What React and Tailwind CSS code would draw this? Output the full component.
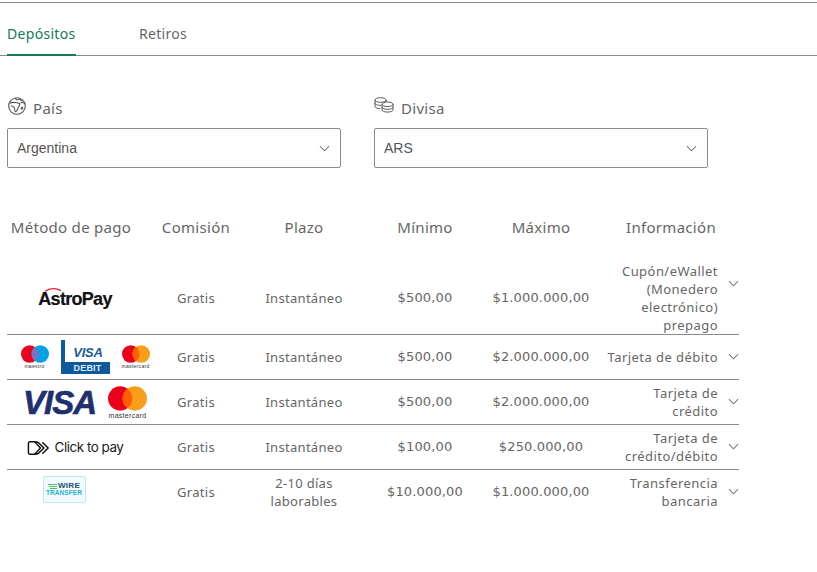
import React from "react";

const grid = "grid grid-cols-[136px_106px_110px_132px_100px_148px]";
const numFont = "font-['DejaVu_Sans',sans-serif] tracking-[0.15px]";

function Chevron({ className }) {
  return (
    <svg viewBox="0 0 12 7" className={className} fill="none" stroke="#777" strokeWidth="1.1">
      <path d="M1 1l5 5 5-5" />
    </svg>
  );
}

function GlobeIcon() {
  return (
    <svg viewBox="0 0 18 18" className="w-[18px] h-[18px]" fill="none" stroke="#555" strokeWidth="1.100">
      <circle cx="9" cy="9" r="8.300" />
      <path d="M2 6.300c1.300-1 2.700-1.100 4-.8 1.100.3 1.800-.2 2.900.2 1 .4 1.800.1 2.500.8.600.6.500 1.500 0 2.200-.6.800-1.200 1.100-1.300 2.100-.1 1-.7 1.700-1.100 2.500-.4.900-1.100 1.700-1.700 1.300-.6-.3-.4-1.700-.8-2.700-.3-.9-.1-1.500-.8-2-.8-.5-1.900-.4-2.500-1.400" />
      <path d="M7.400.9c.1 1.200 1 2 2.100 1.900.9 0 1.200-.7 2-.7.800 0 1 .8 1.400 1.300.4.500 1.100.6 1.400 1.200M12.400 6c1-.6 2-.6 2.700-.2.500.3 1.200.4 2.100.3M13.500 10.500c.7-.5 1.300-.2 1.200.6-.1.900-.9 1.500-1.300 1-.3-.4-.2-1.200.1-1.600z" />
    </svg>
  );
}

function CoinsIcon() {
  return (
    <svg viewBox="0 0 20 16" className="w-[20px] h-[16px]" fill="none" stroke="#555" strokeWidth="1">
      <ellipse cx="6.500" cy="3" rx="5.500" ry="2.300" />
      <path d="M1 3v6.500c0 1.100 2 2 5 2.100M1 6.200c0 1.200 2.400 2.200 6 2.200M12 3v2" />
      <ellipse cx="13.500" cy="7.300" rx="5.500" ry="2.300" />
      <path d="M8 7.300v5.600c0 1.200 2.400 2.200 5.500 2.200s5.500-1 5.500-2.200V7.300M8 10.100c0 1.200 2.400 2.200 5.500 2.200s5.500-1 5.500-2.200" />
    </svg>
  );
}

function Circles({ left, right, mid, label, size, labelSize }) {
  return (
    <div className="flex flex-col items-center">
      <svg viewBox="0 0 40 25" className={size}>
        <circle cx="12.500" cy="12.500" r="12.500" fill={left} />
        <circle cx="27.500" cy="12.500" r="12.500" fill={right} />
        <path d="M20 2.500a12.500 12.500 0 0 1 0 20 12.500 12.500 0 0 1 0-20z" fill={mid} />
      </svg>
      <span className={`font-['Liberation_Sans',sans-serif] leading-none text-[#333] mt-px ${labelSize}`}>{label}</span>
    </div>
  );
}

function AstroPay() {
  return (
    <div className="relative pt-[1px] font-['Liberation_Sans',sans-serif] font-bold text-[18px] leading-none tracking-[-0.7px] text-[#111] [-webkit-text-stroke:0.2px_#111]">
      AstroPay
      <svg viewBox="0 0 16 4" className="absolute left-[6px] -top-[2px] w-[18px] h-[5px]" fill="none" stroke="#e2202c" strokeWidth="1.200">
        <path d="M1 3.500C5 .5 11 .5 15 3" />
      </svg>
    </div>
  );
}

function VisaDebit() {
  return (
    <div className="w-[49px] h-[34px] relative">
      <div className="absolute left-0 top-0 w-[4px] h-[34px] bg-[#0f5a9c]" />
      <div className="absolute left-0 bottom-0 w-[49px] h-[12px] bg-[#0f5a9c] flex items-center justify-end pr-[8px]">
        <span className="font-['Liberation_Sans',sans-serif] font-bold text-[#dfeaf4] text-[9px] leading-none tracking-[0.2px]">DEBIT</span>
      </div>
      <span className="absolute right-[7px] top-[6px] font-['Liberation_Sans',sans-serif] font-bold italic text-[#1a5a96] text-[13px] leading-none tracking-[-0.3px]">VISA</span>
    </div>
  );
}

function ClickToPay() {
  return (
    <div className="flex items-center gap-[4px] mt-px">
      <svg viewBox="0 0 25 16" className="w-[24px] h-[16px]" fill="none" stroke="#111" strokeWidth="1.500">
        <path d="M10 1.500H3a1.500 1.500 0 0 0-1.500 1.500v10A1.500 1.500 0 0 0 3 14.500h7" />
        <path d="M8.500 2h3l6 6-6 6h-3l5.500-6z" />
        <path d="M16 2l6 6-6 6" />
      </svg>
      <span className="font-['Inter',sans-serif] text-[13.500px] leading-none tracking-[-0.5px] text-[#222]">Click to pay</span>
    </div>
  );
}

function WireTransfer() {
  return (
    <div className="w-[43px] h-[27px] mr-[22px] mb-[5px] rounded-[2px] border border-[#bfe8f2] bg-[#f1fbfd] flex flex-col items-center justify-center font-['Liberation_Sans',sans-serif] font-bold leading-none">
      <div className="flex items-center gap-[1px]">
        <div className="flex flex-col gap-[1px] w-[9px]">
          <div className="h-[1px] bg-[#4cc35f]" />
          <div className="h-[1px] bg-[#4cc35f] ml-[1px]" />
          <div className="h-[1px] bg-[#4cc35f] ml-[2px]" />
        </div>
        <span className="text-[8px] text-[#1d4e7a]">WIRE</span>
      </div>
      <span className="text-[6.500px] tracking-[0.1px] text-[#2bb3cf]">TRANSFER</span>
    </div>
  );
}

const rows = [
  {
    logo: <AstroPay />,
    plazo: "Instantáneo",
    min: "$500,00",
    max: "$1.000.000,00",
    info: "Cupón/eWallet (Monedero electrónico) prepago",
    rowClass: "h-[73px]",
    chevronClass: "mb-[30px]",
  },
  {
    logo: (
      <div className="flex items-center gap-[12px] pl-[20px]">
        <Circles left="#eb001b" right="#00a2e5" mid="#7673c0" label="maestro" size="w-[28px] h-[18px]" labelSize="text-[5px]" />
        <VisaDebit />
        <Circles left="#eb001b" right="#f79e1b" mid="#ff5f00" label="mastercard" size="w-[28px] h-[18px]" labelSize="text-[5px]" />
      </div>
    ),
    plazo: "Instantáneo",
    min: "$500,00",
    max: "$2.000.000,00",
    info: "Tarjeta de débito",
    rowClass: "h-[45px]",
    chevronClass: "mb-[2px]",
  },
  {
    logo: (
      <div className="flex items-center gap-[12px] pl-[20px]">
        <span className="font-['Liberation_Sans',sans-serif] font-bold italic text-[33px] leading-none tracking-[-1px] text-[#20306f] [-webkit-text-stroke:0.6px_#20306f]">VISA</span>
        <Circles left="#eb001b" right="#f79e1b" mid="#ff5f00" label="mastercard" size="w-[39px] h-[25px]" labelSize="text-[7px]" />
      </div>
    ),
    plazo: "Instantáneo",
    min: "$500,00",
    max: "$2.000.000,00",
    info: "Tarjeta de crédito",
    rowClass: "h-[45px]",
    chevronClass: "mb-[2px]",
  },
  {
    logo: <ClickToPay />,
    plazo: "Instantáneo",
    min: "$100,00",
    max: "$250.000,00",
    info: "Tarjeta de crédito/débito",
    rowClass: "h-[45px]",
    chevronClass: "mb-[2px]",
  },
  {
    logo: <WireTransfer />,
    plazo: "2-10 días laborables",
    min: "$10.000,00",
    max: "$1.000.000,00",
    info: "Transferencia bancaria",
    rowClass: "h-[45px] pb-px",
    chevronClass: "mb-[2px]",
    last: true,
  },
];

function Select({ value }) {
  return (
    <div className="w-[334px] h-[40px] border border-[#8a8a8a] rounded-[2px] flex items-center justify-between pl-[9px] pr-[10px] font-['Liberation_Sans',sans-serif] text-[14px] text-[#555]">
      {value}
      <Chevron className="w-[11px] h-[7px]" />
    </div>
  );
}

export default function App() {
  return (
    <div className="w-[817px] h-[572px] bg-white overflow-hidden pt-[2px] font-['Noto_Sans',sans-serif] text-[#666]">
      <div className="h-px bg-[#8a8a8a]" />
      <div className="h-[53px] border-b border-[#8a8a8a] flex items-end pl-[7px] text-[14px] tracking-[0.3px]">
        <div className="h-[52px] w-[69px] border-b-2 -mb-px border-[#137a5c] text-[#137a5c] pt-[20px] leading-[20px]">
          Depósitos
        </div>
        <div className="h-[52px] ml-[63px] pt-[21px] leading-[20px]">Retiros</div>
      </div>

      <div className="flex gap-[33px] pl-[7px] pt-[41px]">
        <div>
          <div className="flex items-start gap-[7px] h-[31px] text-[15px] leading-[22px] tracking-[0.3px]">
            <div className="pl-px"><GlobeIcon /></div>
            <span>País</span>
          </div>
          <Select value="Argentina" />
        </div>
        <div>
          <div className="flex items-start gap-[7px] h-[31px] text-[15px] leading-[22px] tracking-[0.3px]">
            <CoinsIcon />
            <span>Divisa</span>
          </div>
          <Select value="ARS" />
        </div>
      </div>

      <div className="w-[732px] ml-[7px] mt-[39px]">
        <div className={`${grid} h-[40px] items-center text-center text-[15px] tracking-[0.3px]`}>
          <div className="pr-[8px]">Método de pago</div>
          <div>Comisión</div>
          <div>Plazo</div>
          <div>Mínimo</div>
          <div>Máximo</div>
          <div className="pl-[12px]">Información</div>
        </div>
        <div className="h-[15px]" />
        {rows.map((r) => (
          <div
            key={r.info}
            className={`${grid} ${r.rowClass} ${r.last ? "" : "border-b border-[#8a8a8a]"} items-center text-center text-[13px] leading-[18px] tracking-[0.3px]`}
          >
            <div className="flex justify-center">{r.logo}</div>
            <div>Gratis</div>
            <div className="px-[15px]">{r.plazo}</div>
            <div className={numFont}>{r.min}</div>
            <div className={numFont}>{r.max}</div>
            <div className="flex items-center justify-end">
              <div className="w-[112px] text-right tracking-[0.45px]">{r.info}</div>
              <Chevron className={`w-[11px] h-[7px] ml-[10px] ${r.chevronClass}`} />
            </div>
          </div>
        ))}
      </div>
    </div>
  );
}
